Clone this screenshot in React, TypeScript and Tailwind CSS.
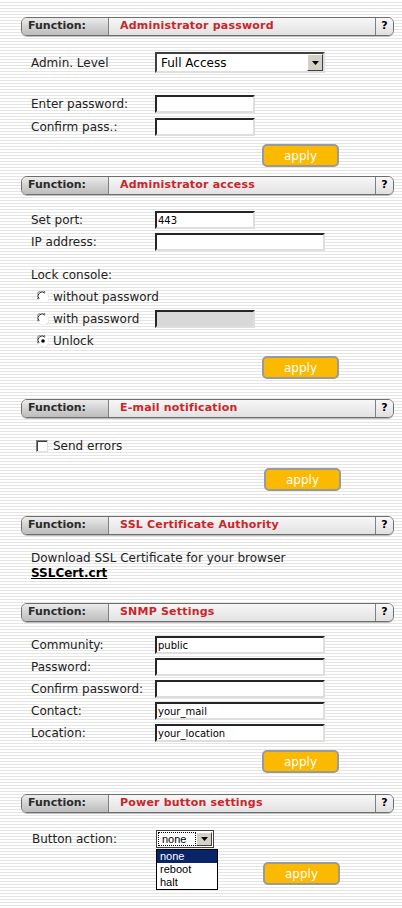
import React from "react";

const font = "font-['DejaVu_Sans',Verdana,sans-serif]";

const FunctionBar = ({title}: {title: string}) => (
  <div className="flex h-[19px] w-[373px] overflow-hidden rounded-[6px] border border-[#6e6e6e] shadow-[0_1px_0_#bdbdbd]">
    <div className="flex w-[86px] items-center bg-gradient-to-b from-[#ececec] via-[#d2d2d2] to-[#bdbdbd] pl-[6px] text-[11px] font-bold text-[#2a2a2a]">
      Function:
    </div>
    <div className="flex flex-1 items-center border-l border-[#808080] bg-gradient-to-b from-[#f7f7f7] to-[#e2e2e2] pl-[11px] text-[11px] font-bold tracking-[0.2px] text-[#c8262b]">
      {title}
    </div>
    <div className="flex w-[18px] items-center justify-center border-l border-[#808080] bg-gradient-to-b from-[#f7f7f7] to-[#e0e0e0] text-[11px] font-bold text-black">
      ?
    </div>
  </div>
);

const Field = ({
  w = 100,
  value = "",
  disabled = false,
}: {
  w?: 100 | 170;
  value?: string;
  disabled?: boolean;
}) => (
  <div
    className={`flex h-[18px] items-center border-t-2 border-l-2 border-b-2 border-r-2 border-t-[#262626] border-l-[#262626] border-r-[#dedede] border-b-[#dedede] pl-[1px] text-[10px] text-black ${
      w === 100 ? "w-[100px]" : "w-[170px]"
    } ${disabled ? "bg-[#d8d8d8]" : "bg-white"}`}
  >
    {value}
  </div>
);

const ApplyButton = ({ml}: {ml: string}) => (
  <div
    className={`flex h-[23px] w-[77px] items-center justify-center rounded-[5px] border-2 border-[#9a9a9a] bg-[#fbb900] text-[12px] text-white ${ml}`}
  >
    apply
  </div>
);

const Row = ({label, children}: {label: string; children: React.ReactNode}) => (
  <div className="flex items-center pl-[10px]">
    <div className="w-[124px] whitespace-nowrap text-[12px] text-[#222]">
      {label}
    </div>
    {children}
  </div>
);

const Radio = ({checked = false}: {checked?: boolean}) => (
  <svg width="12" height="12" viewBox="0 0 12 12" className="shrink-0">
    <circle cx="6" cy="6" r="5.5" fill="#ffffff" />
    <path d="M1.2 8.5 A5 5 0 0 1 8.5 1.2" fill="none" stroke="#808080" strokeWidth="1" />
    <path d="M2.2 8 A4 4 0 0 1 8 2.2" fill="none" stroke="#303030" strokeWidth="1" />
    <path d="M3.5 10.8 A5 5 0 0 0 10.8 3.5" fill="none" stroke="#e0e0e0" strokeWidth="1" />
    {checked && <circle cx="6" cy="6" r="1.8" fill="#000" />}
  </svg>
);

const Arrow = () => (
  <div className="flex h-full w-[16px] items-center justify-center border border-t-white border-l-white border-r-[#404040] border-b-[#404040] bg-[#d4d0c8]">
    <svg width="7" height="4" viewBox="0 0 7 4">
      <path d="M0 0 H7 L3.5 4 Z" fill="#000" />
    </svg>
  </div>
);

export default function App() {
  return (
    <div
      className={`min-h-[908px] w-[402px] bg-[repeating-linear-gradient(to_bottom,#ffffff_0px,#ffffff_2px,#e5e5e5_2px,#e5e5e5_3px)] pl-[21px] pt-[17px] ${font}`}
    >
      {/* Administrator password */}
      <FunctionBar title="Administrator password" />
      <div className="mt-[16px] h-[21px]">
        <Row label="Admin. Level">
          <div className="flex h-[21px] w-[170px] items-center border-2 border-t-[#404040] border-l-[#404040] border-r-[#dedede] border-b-[#dedede] bg-white">
            <div className="flex-1 pl-[4px] text-[12px] text-black">
              Full Access
            </div>
            <Arrow />
          </div>
        </Row>
      </div>
      <div className="mt-[22px]">
        <Row label="Enter password:">
          <Field />
        </Row>
      </div>
      <div className="mt-[5px]">
        <Row label="Confirm pass.:">
          <Field />
        </Row>
      </div>
      <div className="mt-[8px]">
        <ApplyButton ml="ml-[241px]" />
      </div>

      {/* Administrator access */}
      <div className="mt-[9px]">
        <FunctionBar title="Administrator access" />
      </div>
      <div className="mt-[16px]">
        <Row label="Set port:">
          <Field value="443" />
        </Row>
      </div>
      <div className="mt-[4px]">
        <Row label="IP address:">
          <Field w={170} />
        </Row>
      </div>
      <div className="mt-[16px] flex h-[16px] items-center pl-[10px] text-[12px] text-[#222]">
        Lock console:
      </div>
      <div className="mt-[3px] flex flex-col pl-[16px] text-[12px] text-[#222]">
        <div className="flex h-[22px] items-center gap-[4px]">
          <Radio />
          <span>without password</span>
        </div>
        <div className="flex h-[22px] items-center">
          <Radio />
          <span className="ml-[4px] w-[102px]">with password</span>
          <Field disabled />
        </div>
        <div className="flex h-[22px] items-center gap-[4px]">
          <Radio checked />
          <span>Unlock</span>
        </div>
      </div>
      <div className="mt-[4px]">
        <ApplyButton ml="ml-[241px]" />
      </div>

      {/* E-mail notification */}
      <div className="mt-[20px]">
        <FunctionBar title="E-mail notification" />
      </div>
      <div className="mt-[20px] flex h-[16px] items-center gap-[5px] pl-[15px] text-[12px] text-[#222]">
        <div className="h-[12px] w-[12px] border border-t-[#808080] border-l-[#808080] border-r-[#e0e0e0] border-b-[#e0e0e0] bg-white shadow-[inset_1px_1px_0_#404040]" />
        <span>Send errors</span>
      </div>
      <div className="mt-[14px]">
        <ApplyButton ml="ml-[243px]" />
      </div>

      {/* SSL Certificate Authority */}
      <div className="mt-[25px]">
        <FunctionBar title="SSL Certificate Authority" />
      </div>
      <div className="mt-[16px] pl-[10px] text-[12px] leading-[15px] text-[#222]">
        <div>Download SSL Certificate for your browser</div>
        <div className="font-bold text-black underline">SSLCert.crt</div>
      </div>

      {/* SNMP Settings */}
      <div className="mt-[22px]">
        <FunctionBar title="SNMP Settings" />
      </div>
      <div className="mt-[14px] flex flex-col gap-[4px]">
        <Row label="Community:">
          <Field w={170} value="public" />
        </Row>
        <Row label="Password:">
          <Field w={170} />
        </Row>
        <Row label="Confirm password:">
          <Field w={170} />
        </Row>
        <Row label="Contact:">
          <Field w={170} value="your_mail" />
        </Row>
        <Row label="Location:">
          <Field w={170} value="your_location" />
        </Row>
      </div>
      <div className="mt-[8px]">
        <ApplyButton ml="ml-[241px]" />
      </div>

      {/* Power button settings */}
      <div className="mt-[21px]">
        <FunctionBar title="Power button settings" />
      </div>
      <div className="mt-[17px] flex h-[18px] items-center pl-[11px]">
        <div className="w-[124px] text-[12px] text-[#222]">Button action:</div>
        <div className="relative">
          <div className="flex h-[18px] w-[58px] items-center border border-[#404040] bg-white p-[1px]">
            <div className="flex h-full flex-1 items-center border border-dotted border-black pl-[3px] font-['Liberation_Sans',Arial,sans-serif] text-[11px] text-black">
              none
            </div>
            <Arrow />
          </div>
          <div className="absolute left-0 top-[19px] z-10 flex w-[62px] flex-col border border-black bg-white font-['Liberation_Sans',Arial,sans-serif] text-[11px] leading-[13px] text-black">
            <div className="bg-[#0a246a] pl-[3px] text-white">none</div>
            <div className="pl-[3px]">reboot</div>
            <div className="pl-[3px]">halt</div>
          </div>
        </div>
      </div>
      <div className="mt-[14px]">
        <ApplyButton ml="ml-[242px]" />
      </div>
    </div>
  );
}
